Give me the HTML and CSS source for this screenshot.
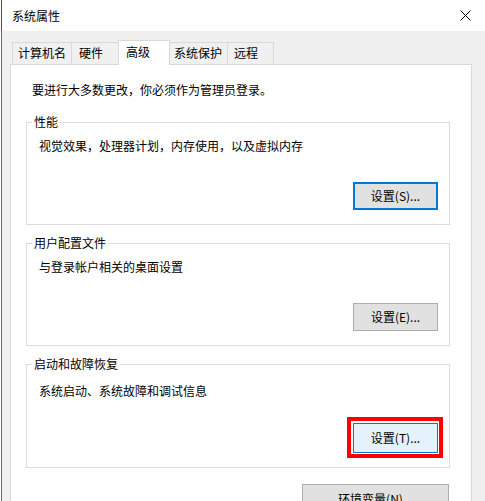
FILE: index.html
```html
<!DOCTYPE html>
<html lang="zh-CN">
<head>
<meta charset="utf-8">
<title>系统属性</title>
<link rel="stylesheet" href="styles.css">
</head>
<body>
<div class="window">
  <div class="titlebar">
    <span class="title">系统属性</span>
    <svg class="close" width="11" height="11" viewBox="0 0 11 11" aria-hidden="true">
      <path d="M0.5 0.5 L10.5 10.5 M10.5 0.5 L0.5 10.5" stroke="#000" stroke-width="1" fill="none"/>
    </svg>
  </div>
  <div class="client">
    <div class="tabs">
      <div class="tab t1">计算机名</div>
      <div class="tab t2">硬件</div>
      <div class="tab t3 active">高级</div>
      <div class="tab t4">系统保护</div>
      <div class="tab t5">远程</div>
    </div>
    <div class="panel">
      <p class="intro">要进行大多数更改，你必须作为管理员登录。</p>
      <div class="group">
        <div class="group-label">性能</div>
        <p class="desc">视觉效果，处理器计划，内存使用，以及虚拟内存</p>
        <button class="btn btn-default">设置(S)...</button>
      </div>
      <div class="group">
        <div class="group-label">用户配置文件</div>
        <p class="desc">与登录帐户相关的桌面设置</p>
        <button class="btn">设置(E)...</button>
      </div>
      <div class="group group-last">
        <div class="group-label">启动和故障恢复</div>
        <p class="desc">系统启动、系统故障和调试信息</p>
        <div class="hl">
          <button class="btn btn-hover">设置(T)...</button>
          <span class="mark"></span>
        </div>
      </div>
      <button class="btn btn-wide">环境变量(N)...</button>
    </div>
  </div>
</div>
</body>
</html>
```

FILE: styles.css
```css
html, body {
  margin: 0;
  padding: 0;
  background: #fff;
  overflow: hidden;
}

body {
  width: 485px;
  height: 501px;
  font-family: "Noto Sans CJK SC", "Noto Sans", sans-serif;
  font-size: 12px;
  color: #000;
}

.window {
  margin-left: 1px;
  height: 501px;
  display: flex;
  flex-direction: column;
}

.titlebar {
  height: 31px;
  flex: 0 0 31px;
  box-sizing: border-box;
  border-left: 1px solid #2b577d;
  background: #fff;
  display: flex;
  align-items: center;
  justify-content: space-between;
  padding-left: 10px;
}

.title {
  line-height: 31px;
}

.close {
  margin-right: 14px;
  display: block;
}

.client {
  flex: 1;
  background: #f0f0f0;
  border-left: 1px solid #6d6d6d;
  padding-top: 9px;
  overflow: hidden;
}

.tabs {
  display: flex;
  align-items: flex-end;
  margin-left: 10px;
  height: 24px;
}

.tab {
  box-sizing: border-box;
  height: 22px;
  border: 1px solid #d9d9d9;
  border-bottom: none;
  background: #f0f0f0;
  line-height: 20px;
  white-space: nowrap;
  margin-left: -1px;
}

.tab:first-child {
  margin-left: 0;
}

.t1 { width: 60px; padding-left: 5px; }
.t2 { width: 48px; padding-left: 7px; }
.t3 { width: 52px; padding-left: 7px; }
.t4 { width: 59px; padding-left: 4px; }
.t5 { width: 47px; padding-left: 6px; }

.tab.active {
  position: relative;
  z-index: 1;
  height: 25px;
  margin-bottom: -1px;
  background: #fff;
  line-height: 22px;
}

.panel {
  margin-left: 8px;
  width: 462px;
  height: 470px;
  box-sizing: border-box;
  border: 1px solid #d9d9d9;
  background: #fff;
  padding: 17px 21px 0 15px;
  display: flex;
  flex-direction: column;
}

.intro {
  margin: 0 0 24px 6px;
  line-height: 16px;
}

.group {
  border: 1px solid #dcdcdc;
  display: flex;
  flex-direction: column;
  padding: 0 11px 14px 0;
  margin-bottom: 18px;
}

.group-label {
  align-self: flex-start;
  margin: -9px 0 0 5px;
  padding: 0 2px;
  background: #fff;
  line-height: 16px;
}

.desc {
  margin: 8px 0 0 12px;
  line-height: 16px;
}

.btn {
  align-self: flex-end;
  margin-top: 28px;
  width: 85px;
  height: 28px;
  box-sizing: border-box;
  border: 1px solid #adadad;
  background: #e1e1e1;
  font-family: inherit;
  font-size: 12px;
  color: #000;
  padding: 0;
  line-height: 16px;
}

.btn-default {
  border: 2px solid #0078d7;
}

.group-last {
  margin-bottom: 16px;
}

.group-last .desc {
  margin-top: 11px;
}

.hl {
  align-self: flex-end;
  position: relative;
  margin-top: 24px;
  display: flex;
}

.hl .btn {
  margin-top: 0;
  height: 30px;
}

.btn-hover {
  border: 1px solid #0078d7;
  background: #e5f1fb;
}

.mark {
  position: absolute;
  top: -6px;
  left: -6px;
  right: -5px;
  bottom: -5px;
  border: 4px solid #ff0000;
  pointer-events: none;
}

.btn-wide {
  margin-top: 0;
  width: 147px;
  height: 30px;
  margin-right: 1px;
}
```
